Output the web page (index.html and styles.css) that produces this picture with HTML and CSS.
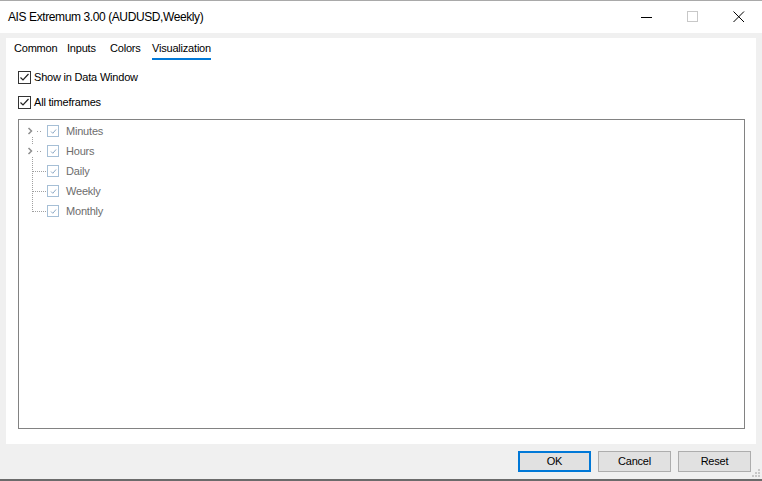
FILE: index.html
```html
<!DOCTYPE html>
<html>
<head>
<meta charset="utf-8">
<link rel="stylesheet" href="styles.css">
</head>
<body>
<div class="window">
  <div class="titlebar">
    <div class="title">AIS Extremum 3.00 (AUDUSD,Weekly)</div>
    <div class="controls">
      <span class="ctl"><svg width="12" height="12" viewBox="0 0 12 12"><line x1="0" y1="6.5" x2="11" y2="6.5" stroke="#000" stroke-width="1"/></svg></span>
      <span class="ctl"><svg width="12" height="12" viewBox="0 0 12 12"><rect x="0.5" y="0.5" width="10" height="10" fill="none" stroke="#c8c8c8" stroke-width="1"/></svg></span>
      <span class="ctl"><svg width="12" height="12" viewBox="0 0 12 12"><path d="M0.5 0.5 L11 11 M11 0.5 L0.5 11" stroke="#000" stroke-width="1"/></svg></span>
    </div>
  </div>
  <div class="body">
    <div class="panel">
      <div class="tabs">
        <span class="tab t1">Common</span>
        <span class="tab t2">Inputs</span>
        <span class="tab t3">Colors</span>
        <span class="tab t4 active">Visualization</span>
      </div>
      <div class="opts">
        <label class="opt"><span class="cb"><svg width="11" height="11" viewBox="0 0 11 11"><path d="M1.5 5.5 L4 8 L9.5 2" fill="none" stroke="#222" stroke-width="1.2"/></svg></span>Show in Data Window</label>
        <label class="opt"><span class="cb"><svg width="11" height="11" viewBox="0 0 11 11"><path d="M1.5 5.5 L4 8 L9.5 2" fill="none" stroke="#222" stroke-width="1.2"/></svg></span>All timeframes</label>
      </div>
      <div class="tree">
        <div class="row">
          <svg class="lines" width="28" height="20" viewBox="0 0 28 20">
            <path d="M9.5 7 L12.5 10 L9.5 13" fill="none" stroke="#8f8f8f" stroke-width="1.5"/>
            <line x1="13.5" y1="16" x2="13.5" y2="20" stroke="#a0a0a0" stroke-dasharray="1 1"/>
            <line x1="18" y1="10.5" x2="23" y2="10.5" stroke="#a0a0a0" stroke-dasharray="1 2"/>
          </svg>
          <span class="tcb"><svg width="9" height="9" viewBox="0 0 9 9"><path d="M2 4.5 L3.8 6.3 L7 2.5" fill="none" stroke="#8eaac6" stroke-width="1"/></svg></span>
          <span class="tlabel">Minutes</span>
        </div>
        <div class="row">
          <svg class="lines" width="28" height="20" viewBox="0 0 28 20">
            <line x1="13.5" y1="0" x2="13.5" y2="4" stroke="#a0a0a0" stroke-dasharray="1 1"/>
            <path d="M9.5 7 L12.5 10 L9.5 13" fill="none" stroke="#8f8f8f" stroke-width="1.5"/>
            <line x1="18" y1="10.5" x2="23" y2="10.5" stroke="#a0a0a0" stroke-dasharray="1 2"/>
            <line x1="13.5" y1="16" x2="13.5" y2="20" stroke="#a0a0a0" stroke-dasharray="1 1"/>
          </svg>
          <span class="tcb"><svg width="9" height="9" viewBox="0 0 9 9"><path d="M2 4.5 L3.8 6.3 L7 2.5" fill="none" stroke="#8eaac6" stroke-width="1"/></svg></span>
          <span class="tlabel">Hours</span>
        </div>
        <div class="row">
          <svg class="lines" width="28" height="20" viewBox="0 0 28 20">
            <line x1="13.5" y1="0" x2="13.5" y2="20" stroke="#a0a0a0" stroke-dasharray="1 1"/>
            <line x1="14" y1="10.5" x2="27" y2="10.5" stroke="#a0a0a0" stroke-dasharray="1 1"/>
          </svg>
          <span class="tcb"><svg width="9" height="9" viewBox="0 0 9 9"><path d="M2 4.5 L3.8 6.3 L7 2.5" fill="none" stroke="#8eaac6" stroke-width="1"/></svg></span>
          <span class="tlabel">Daily</span>
        </div>
        <div class="row">
          <svg class="lines" width="28" height="20" viewBox="0 0 28 20">
            <line x1="13.5" y1="0" x2="13.5" y2="20" stroke="#a0a0a0" stroke-dasharray="1 1"/>
            <line x1="14" y1="10.5" x2="27" y2="10.5" stroke="#a0a0a0" stroke-dasharray="1 1"/>
          </svg>
          <span class="tcb"><svg width="9" height="9" viewBox="0 0 9 9"><path d="M2 4.5 L3.8 6.3 L7 2.5" fill="none" stroke="#8eaac6" stroke-width="1"/></svg></span>
          <span class="tlabel">Weekly</span>
        </div>
        <div class="row">
          <svg class="lines" width="28" height="20" viewBox="0 0 28 20">
            <line x1="13.5" y1="0" x2="13.5" y2="11" stroke="#a0a0a0" stroke-dasharray="1 1"/>
            <line x1="14" y1="10.5" x2="27" y2="10.5" stroke="#a0a0a0" stroke-dasharray="1 1"/>
          </svg>
          <span class="tcb"><svg width="9" height="9" viewBox="0 0 9 9"><path d="M2 4.5 L3.8 6.3 L7 2.5" fill="none" stroke="#8eaac6" stroke-width="1"/></svg></span>
          <span class="tlabel">Monthly</span>
        </div>
      </div>
    </div>
    <div class="buttons">
      <button class="btn default">OK</button>
      <button class="btn">Cancel</button>
      <button class="btn">Reset</button>
    </div>
    <svg class="grip" width="8" height="8" viewBox="0 0 8 8">
      <rect x="6" y="0" width="2" height="2" fill="#c8c8c8"/>
      <rect x="3" y="3" width="2" height="2" fill="#c8c8c8"/>
      <rect x="6" y="3" width="2" height="2" fill="#c8c8c8"/>
      <rect x="0" y="6" width="2" height="2" fill="#c8c8c8"/>
      <rect x="3" y="6" width="2" height="2" fill="#c8c8c8"/>
      <rect x="6" y="6" width="2" height="2" fill="#c8c8c8"/>
    </svg>
  </div>
</div>
</body>
</html>
```
FILE: styles.css
```css
* { box-sizing: border-box; }
html, body { margin: 0; padding: 0; }
body {
  width: 762px;
  height: 481px;
  overflow: hidden;
  font-family: "Liberation Sans", Arial, sans-serif;
  font-size: 11px;
  letter-spacing: -0.2px;
  color: #000;
  background: #f0f0f0;
}
.window {
  width: 762px;
  height: 481px;
  display: flex;
  flex-direction: column;
  border-top: 1px solid #a9a9a9;
  border-bottom: 2px solid #6b6b6b;
}
.titlebar {
  height: 32px;
  background: #fff;
  display: flex;
  align-items: center;
  flex-shrink: 0;
}
.title {
  padding-left: 8px;
  flex: 1;
  font-size: 12px;
  letter-spacing: -0.4px;
  line-height: 16px;
  padding-bottom: 1px;
}
.controls {
  display: flex;
  align-items: center;
  height: 100%;
}
.ctl {
  width: 46px;
  display: flex;
  justify-content: center;
  align-items: center;
  height: 100%;
}
.ctl svg { display: block; }
.body {
  flex: 1;
  position: relative;
  display: flex;
  flex-direction: column;
  padding: 5px 6px 0 6px;
}
.panel {
  background: #fff;
  height: 406px;
  padding: 0 11px 0 12px;
  display: flex;
  flex-direction: column;
}
.tabs {
  display: flex;
  height: 22px;
  margin-left: -4px;
  padding-top: 2px;
}
.tab {
  height: 20px;
  line-height: 17px;
}
.t1 { width: 53px; }
.t2 { width: 43px; }
.t3 { width: 42px; }
.t4.active {
  border-bottom: 2px solid #0078d7;
}
.opts {
  display: flex;
  flex-direction: column;
  padding-top: 11px;
  gap: 12px;
}
.opt {
  display: flex;
  align-items: center;
  height: 13px;
  line-height: 13px;
}
.cb {
  width: 13px;
  height: 13px;
  border: 1px solid #333;
  background: #fff;
  margin-right: 3px;
  display: flex;
  align-items: center;
  justify-content: center;
}
.cb svg { display: block; }
.tree {
  margin-top: 10px;
  height: 310px;
  border: 1px solid #828282;
  padding-top: 1px;
  display: flex;
  flex-direction: column;
}
.row {
  height: 20px;
  display: flex;
  align-items: center;
  color: #6d6d6d;
}
.lines { display: block; flex-shrink: 0; }
.tcb {
  width: 12px;
  height: 12px;
  border: 1px solid #a6bfd6;
  background: #fff;
  display: flex;
  align-items: center;
  justify-content: center;
  margin-right: 7px;
}
.tcb svg { display: block; }
.tlabel { line-height: 16px; }
.buttons {
  display: flex;
  justify-content: flex-end;
  gap: 7px;
  padding-top: 7px;
  padding-right: 5px;
}
.btn {
  width: 73px;
  height: 21px;
  border: 1px solid #adadad;
  background: #e1e1e1;
  font-family: "Liberation Sans", Arial, sans-serif;
  font-size: 11px;
  letter-spacing: -0.2px;
  color: #000;
  padding: 0;
  line-height: 17px;
}
.btn.default {
  border: 2px solid #0078d7;
}
.grip {
  position: absolute;
  right: 2px;
  bottom: 2px;
}
```
